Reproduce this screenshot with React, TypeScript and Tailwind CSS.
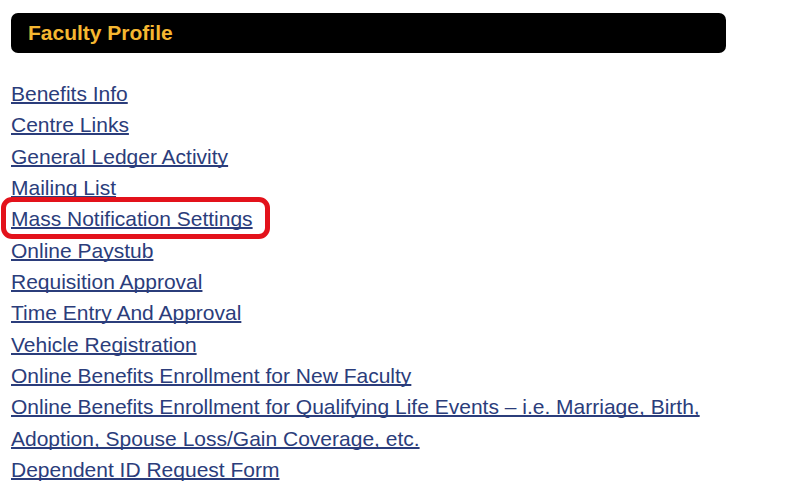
import React from "react";

const links: React.ReactNode[] = [
  "Benefits Info",
  "Centre Links",
  "General Ledger Activity",
  "Mailing List",
  "Mass Notification Settings",
  "Online Paystub",
  "Requisition Approval",
  "Time Entry And Approval",
  "Vehicle Registration",
  "Online Benefits Enrollment for New Faculty",
];

const linkCls =
  "underline underline-offset-[1px] [text-decoration-skip-ink:none] decoration-[1.5px] w-fit";

export default function App() {
  return (
    <div
      className="relative w-[800px] h-[485px] bg-white overflow-hidden"
      style={{ fontFamily: '"Liberation Sans", Arial, sans-serif' }}
    >
      <div className="pt-[13px] pl-[11px]">
        <div className="w-[715px] h-[40px] bg-black rounded-[7px] flex items-center pl-[17px]">
          <span className="text-[21px] font-bold text-[#f5b731]">Faculty Profile</span>
        </div>
        <div className="mt-[25px] flex flex-col text-[21px] leading-[31.33px] text-[#2b3d7b]">
          {links.map((l, i) => (
            <a key={i} href="#" className={linkCls}>
              {l}
            </a>
          ))}
          <a href="#" className={linkCls}>
            Online Benefits Enrollment for Qualifying Life Events – i.e. Marriage, Birth,
            <br />
            Adoption, Spouse Loss/Gain Coverage, etc.
          </a>
          <a href="#" className={linkCls}>
            Dependent ID Request Form
          </a>
        </div>
      </div>
      <div className="absolute left-[1px] top-[197px] w-[269px] h-[42px] border-[5px] border-[#e3121b] rounded-[11px]" />
    </div>
  );
}
